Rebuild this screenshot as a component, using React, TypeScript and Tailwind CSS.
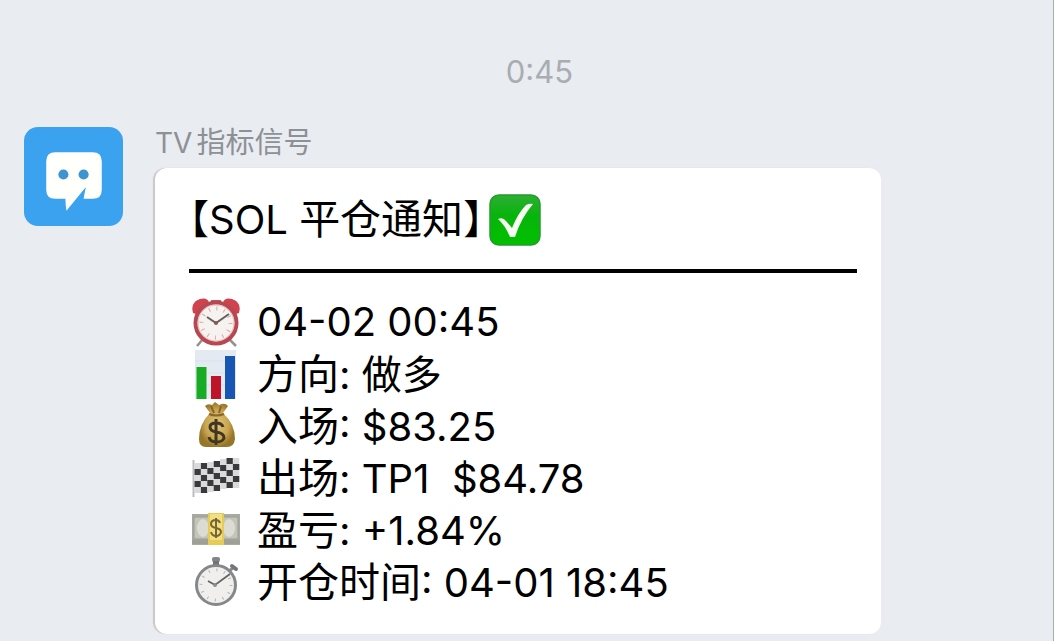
import type { ReactNode } from "react";

function BotAvatar() {
  return (
    <svg viewBox="0 0 98 98" className="size-full" role="img" aria-label="Bot">
      <rect width="98" height="98" fill="#3aa2ee" />
      <path
        d="M31 25H68Q77 25 77 34V62Q77 71 68 71H59L61 60L42 83Q41 77 41 71H31Q22 71 22 62V34Q22 25 31 25Z"
        fill="#fffffb"
      />
      <path d="M61 60Q60 66 55 74L50 74Z" fill="#3aa2ee" />
      <circle cx="39" cy="47" r="5" fill="#3d94cf" />
      <circle cx="59" cy="47" r="5" fill="#3d94cf" />
    </svg>
  );
}

function CheckIcon() {
  return (
    <svg viewBox="0 0 52 52" className="size-[52px]" aria-hidden="true">
      <defs>
        <linearGradient id="check-fill" x1="0" y1="0" x2="0" y2="1">
          <stop offset="0" stopColor="#2fae35" />
          <stop offset="0.4" stopColor="#08b40c" />
          <stop offset="1" stopColor="#00c000" />
        </linearGradient>
      </defs>
      <rect x="1" y="1" width="50" height="50" rx="9" fill="url(#check-fill)" stroke="#249b2c" strokeWidth="1.5" />
      <path d="M9 25Q14 23 17 27L23 34Q29 19 37 11Q41 9 44 10Q32 24 26 43H21Q16 31 9 25Z" fill="#f6fff2" />
    </svg>
  );
}

function AlarmClockIcon() {
  return (
    <svg viewBox="0 0 50 50" className="size-full">
      <path d="M12 42L6 49M38 42L45 49" stroke="#97918f" strokeWidth="2.5" />
      <path d="M2 16Q-1 5 9 2Q17 0 18 6L5 17Z" fill="#cf4250" />
      <path d="M48 16Q51 5 41 2Q33 0 32 6L45 17Z" fill="#cf4250" />
      <path d="M20 4H30" stroke="#bd5a60" strokeWidth="2" />
      <circle cx="25" cy="26" r="20.5" fill="#f5f2f0" stroke="#b9474f" strokeWidth="4" />
      <circle cx="25" cy="26" r="18" fill="none" stroke="#e2b9b9" strokeWidth="1" />
      <circle cx="25" cy="26" r="14.5" fill="none" stroke="#d3aaa6" strokeWidth="4" strokeDasharray="1 6.592" />
      <path d="M16 20L25 26L38 17" fill="none" stroke="#65605d" strokeWidth="2" />
      <circle cx="25" cy="26" r="2" fill="#8c5652" />
    </svg>
  );
}

function ChartIcon() {
  return (
    <svg viewBox="0 0 50 50" className="size-full">
      <rect x="4" y="1" width="41" height="49" fill="#e4eaf2" />
      <path d="M4 12H45M4 24H45M4 36H45" stroke="#dae1eb" />
      <rect x="5.5" y="18" width="10" height="32" fill="#17ac24" />
      <rect x="20" y="27" width="10" height="23" fill="#bd1429" />
      <rect x="34" y="7" width="10" height="43" fill="#1757b3" />
    </svg>
  );
}

function MoneyBagIcon() {
  return (
    <svg viewBox="0 0 50 50" className="size-full">
      <defs>
        <radialGradient id="bag-fill">
          <stop offset="0" stopColor="#dfc77e" />
          <stop offset="0.65" stopColor="#c7a550" />
          <stop offset="1" stopColor="#977529" />
        </radialGradient>
      </defs>
      <path
        d="M19 12L14 5Q17 2 21 4L24 1L28 4Q34 1 37 5L32 12Q44 23 44 38Q43 46 36 46H15Q8 46 8 38Q8 23 19 12Z"
        fill="url(#bag-fill)"
      />
      <path d="M18 13Q25 16 33 13M20 5L23 12M30 5L28 12" fill="none" stroke="#8a642a" strokeWidth="2" />
      <path
        d="M32 26Q31 22 25 22Q19 22 19 26Q19 30 25 31Q33 32 33 37Q32 41 25 41Q19 41 18 36M25 18V44"
        fill="none"
        stroke="#423620"
        strokeWidth="3"
      />
    </svg>
  );
}

const flagColumnTops = [11, 11, 10, 9, 7, 6, 6];
const flagRows = [0, 1, 2, 3, 4];

function FlagIcon() {
  return (
    <svg viewBox="0 0 50 50" className="size-full">
      <path d="M2.5 7V44" stroke="#bdbcbc" strokeWidth="2" />
      {flagColumnTops.map((top, column) =>
        flagRows.map((row) => (
          <rect
            key={`${column}-${row}`}
            x={3.5 + column * 6.4}
            y={top - 1 + row * 6}
            width="6.4"
            height="6"
            fill={(column + row) % 2 === 1 ? "#3a3a3d" : "#dadada"}
          />
        )),
      )}
    </svg>
  );
}

function BanknoteIcon() {
  return (
    <svg viewBox="0 0 50 50" className="size-full">
      <rect x="1" y="9" width="48" height="31" fill="#a9aaa0" />
      <rect x="3" y="12" width="44" height="22" fill="#c3c4ba" stroke="#9b9d94" />
      <ellipse cx="12" cy="23" rx="6" ry="9" fill="#dddcd2" />
      <ellipse cx="38" cy="23" rx="6" ry="9" fill="#dddcd2" />
      <path d="M1 36H49M1 38H49" stroke="#94968d" />
      <rect x="17" y="8" width="16" height="32" fill="#e6cb58" />
      <rect x="19" y="9" width="12" height="26" fill="#f2df83" />
      <path
        d="M29 18Q28 15 25 15Q20 15 20 19Q20 22 25 23Q30 24 30 27Q29 31 25 31Q21 31 20 27M25 13V33"
        fill="none"
        stroke="#776632"
        strokeWidth="2"
      />
    </svg>
  );
}

function StopwatchIcon() {
  return (
    <svg viewBox="0 0 50 50" className="size-full">
      <rect x="21" y="0" width="8" height="5" rx="2" fill="#83868a" />
      <rect x="22" y="4" width="6" height="5" fill="#6f7474" />
      <path d="M38 14L42 11" stroke="#898b8d" strokeWidth="3" />
      <path d="M41 9L45 12" stroke="#73777a" strokeWidth="4" strokeLinecap="round" />
      <circle cx="25" cy="28" r="19.5" fill="#f1efed" stroke="#85888b" strokeWidth="3" />
      <circle cx="25" cy="28" r="15" fill="none" stroke="#b4b2ae" strokeWidth="3" strokeDasharray="1 6.854" />
      <path d="M17 24L24 28L39 17" fill="none" stroke="#656461" strokeWidth="1.8" />
      <circle cx="24" cy="28" r="2" fill="#8e8b88" />
    </svg>
  );
}

function Row({ icon, label, children }: { icon: ReactNode; label?: string; children: ReactNode }) {
  return (
    <li className="flex h-[52px] items-center gap-4">
      <span className="size-[50px] shrink-0" aria-hidden="true">{icon}</span>
      <span className="whitespace-pre">
        {label && <span className="text-[41px]">{label}</span>}
        {children}
      </span>
    </li>
  );
}

export default function App() {
  return (
    <main className="min-h-screen border-r border-[#a9abae] bg-[#e9ecf1] pb-2 font-['Inter','Noto_Sans_CJK_SC',sans-serif] text-black">
      <time className="block pt-[52px] pl-[26px] text-center text-[31px] leading-10 text-[#a9acb0]">0:45</time>
      <article className="mt-[35px] flex items-start gap-8 pl-6">
        <div className="size-[99px] shrink-0 overflow-hidden rounded-[14px]">
          <BotAvatar />
        </div>
        <div className="min-w-0 grow">
          <h2 className="flex gap-1 text-[28px] leading-8 text-[#8d9095]">
            <span>TV</span>
            <span className="text-[29px]">指标信号</span>
          </h2>
          <section className="mt-[9px] mr-[172px] rounded-xl bg-white pt-[25px] pr-6 pb-[26px] pl-[34px] text-[40px] leading-[52px] shadow-[-2px_0_1px_#cbc8cc,0_0_6px_#eee9ef]">
            <h1 className="flex items-center gap-[6px] whitespace-nowrap">
              <span>
                <span className="[font-feature-settings:'halt']">【</span>
                SOL <span className="text-[41px]">平仓通知</span>
                <span className="[font-feature-settings:'halt']">】</span>
              </span>
              <CheckIcon />
            </h1>
            <hr className="mt-[23px] border-t-4 border-black" />
            <ul className="mt-[23px] ml-[2px]">
              <Row icon={<AlarmClockIcon />}>04-02 00:45</Row>
              <Row icon={<ChartIcon />} label="方向">: 做多</Row>
              <Row icon={<MoneyBagIcon />} label="入场">: $83.25</Row>
              <Row icon={<FlagIcon />} label="出场">: TP1  $84.78</Row>
              <Row icon={<BanknoteIcon />} label="盈亏">: +1.84%</Row>
              <Row icon={<StopwatchIcon />} label="开仓时间">: 04-01 18:45</Row>
            </ul>
          </section>
        </div>
      </article>
    </main>
  );
}
